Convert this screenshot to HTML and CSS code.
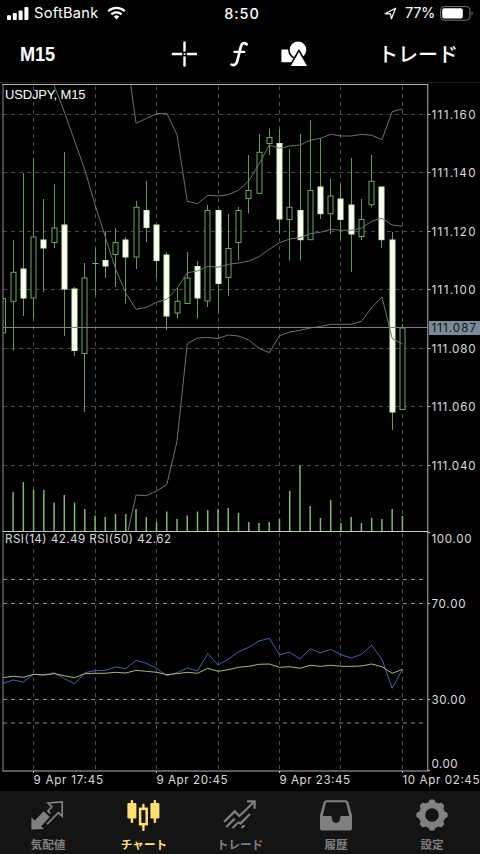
FILE: index.html
```html
<!DOCTYPE html>
<html lang="ja">
<head>
    <meta charset="UTF-8">
    <meta name="viewport" content="width=device-width, initial-scale=1.0">
    <title>USDJPY, M15</title>
    <link rel="stylesheet" href="styles.css">
</head>
<body>
    <div class="status-bar">
        <div class="carrier">
            <svg width="22" height="13" viewBox="0 0 22 13" fill="#fff">
                <rect x="0" y="8.3" width="4" height="4.7" rx="1"/>
                <rect x="5.8" y="6" width="4" height="7" rx="1"/>
                <rect x="11.6" y="3.4" width="4" height="9.6" rx="1"/>
                <rect x="17.4" y="0" width="4" height="13" rx="1"/>
            </svg>
            <span class="carrier-name">SoftBank</span>
            <svg class="wifi" width="19" height="14" viewBox="0 0 19 14" fill="none" stroke="#fff" stroke-width="2.3">
                <path d="M1.2 5.2a11.8 11.8 0 0 1 16.6 0"/>
                <path d="M4.4 8.4a7.2 7.2 0 0 1 10.2 0"/>
                <path d="M9.5 13.4l-2.7-2.8a3.8 3.8 0 0 1 5.4 0z" fill="#fff" stroke="none"/>
            </svg>
        </div>
        <div class="clock">8:50</div>
        <div class="battery">
            <svg width="13" height="13" viewBox="0 0 13 13" fill="none" stroke="#fff" stroke-width="1.2" stroke-linejoin="round">
                <path d="M1 6.7L11.6 1.2L7.4 11.8L6.5 6.9z"/>
            </svg>
            <span class="percent">77%</span>
            <svg class="cell" width="34" height="15" viewBox="0 0 34 15">
                <rect x=".6" y=".6" width="29.4" height="13.6" rx="3.6" fill="none" stroke="#777" stroke-width="1"/>
                <rect x="2.2" y="2.2" width="20.6" height="10.4" rx="2" fill="#fff"/>
                <path d="M31.6 5q2 2.4 0 4.8z" fill="#888"/>
            </svg>
        </div>
    </div>

    <div class="toolbar">
        <span class="timeframe">M15</span>
        <div class="tools">
            <svg width="26" height="26" viewBox="0 0 26 26" stroke="#fff" stroke-width="2.4" stroke-linecap="round">
                <path d="M13.5 1.4v8.2M13.5 16.4v8.2M1.9 13h8.2M16.9 13h8.2"/>
                <path d="M13.5 13h.01" stroke-width="2"/>
            </svg>
            <svg width="26" height="26" viewBox="0 0 26 26" fill="none" stroke="#fff" stroke-linecap="round">
                <path d="M20.6 3.3C18.2 1.2 15.8 2 14.8 5.8L11.4 19.5C10.6 23.2 8.4 24.9 5.6 23.6" stroke-width="2.7"/>
                <path d="M8.4 10.9h9.8" stroke-width="2.3"/>
            </svg>
            <svg width="26" height="26" viewBox="0 0 26 26" fill="#fff" stroke="#000" stroke-width="1.6">
                <rect x="-.4" y="7.6" width="14.6" height="14.4" rx="1.5"/>
                <circle cx="17" cy="8.8" r="9.1"/>
                <path d="M17.9 9.4L27.4 25.9H8.4z" stroke-linejoin="round"/>
            </svg>
        </div>
        <span class="trade">トレード</span>
    </div>

    <svg class="chart" id="chart" width="480" height="708" viewBox="0 83 480 708"></svg>

    <div class="tab-bar">
        <div class="tab">
            <svg width="34" height="32" viewBox="0 0 34 32">
                <path d="M.4 30.6V18.4L3.8 21.4L12.6 12.2L18.8 18L10 27.2L13 30z" fill="#808080"/>
                <path d="M19.2 14.4L16.9 11.9L20.9 7.8L17.1 3.9L31.2 2.9V17.2L27.4 13.6L16 25.2" fill="none" stroke="#808080" stroke-width="1.7"/>
            </svg>
            <span>気配値</span>
        </div>
        <div class="tab active">
            <svg width="34" height="32" viewBox="0 0 34 32" fill="#ffdf73">
                <rect x=".4" y="4" width="9" height="15.6" rx="1"/>
                <rect x="3.7" y="1" width="2.4" height="23" rx="1"/>
                <rect x="23.4" y="4" width="9" height="15.6" rx="1"/>
                <rect x="26.7" y="1" width="2.4" height="23" rx="1"/>
                <path d="M16.4 6v4M16.4 27v4" stroke="#ffdf73" stroke-width="2.4" stroke-linecap="round"/>
                <rect x="13.1" y="9.8" width="6.6" height="15.4" fill="none" stroke="#ffdf73" stroke-width="2.5"/>
            </svg>
            <span>チャート</span>
        </div>
        <div class="tab">
            <svg width="34" height="32" viewBox="0 0 34 32" fill="none" stroke="#808080" stroke-width="2.2">
                <path d="M1 22.8L11.8 12.4L16.4 17L31 3"/>
                <path d="M24 2.4h7.6v7.4"/>
                <path d="M3.2 28L11.8 19.6M9.6 29L14.4 24.2M14.4 23.2l3.2 1.2L27 15M18.6 29L21.4 26.2"/>
            </svg>
            <span>トレード</span>
        </div>
        <div class="tab">
            <svg width="34" height="32" viewBox="0 0 34 32" fill="#808080" fill-rule="evenodd">
                <path d="M7.6 1.2H26.4Q28.6 1.2 29.2 3L33 16V28.4Q33 31.6 30 31.6H4Q1 31.6 1 28.4V16L4.8 3Q5.4 1.2 7.6 1.2zM8 3.2Q7 3.2 6.6 4.4L3.8 16.9H12.4C12.8 21.6 14 23.7 17 23.7S21.2 21.6 21.6 16.9H30.2L27.4 4.4Q27 3.2 26 3.2z"/>
            </svg>
            <span>履歴</span>
        </div>
        <div class="tab">
            <svg width="34" height="32" viewBox="0 0 34 32">
                <circle cx="17" cy="16" r="10" fill="none" stroke="#808080" stroke-width="6.4"/>
                <g stroke="#808080" stroke-width="6.6" stroke-linecap="round">
                    <path d="M17 3.5v2M17 26.5v2M4.5 16h2M27.5 16h2"/>
                    <path d="M17 3.8v2M17 26.2v2M4.8 16h2M27.2 16h2" transform="rotate(45 17 16)"/>
                </g>
            </svg>
            <span>設定</span>
        </div>
    </div>

    <script src="chart.js"></script>
</body>
</html>
```

FILE: styles.css
```css
body {
    margin: 0;
    width: 480px;
    height: 854px;
    display: flex;
    flex-direction: column;
    overflow: hidden;
    background-color: #000;
    color: #fff;
    font-family: Inter, "Noto Sans CJK JP", sans-serif;
}
svg {
    display: block;
    flex-shrink: 0;
}
.status-bar {
    height: 27px;
    box-sizing: border-box;
    padding: 0 7px;
    display: grid;
    grid-template-columns: 1fr auto 1fr;
    align-items: center;
    line-height: 27px;
}
.carrier,
.battery {
    display: flex;
    align-items: center;
}
.carrier-name {
    margin-left: 5px;
    width: 66px;
    font-size: 14.6px;
    letter-spacing: 0.3px;
    white-space: nowrap;
}
.wifi {
    margin-left: 7px;
    margin-top: -2px;
}
.clock {
    padding-left: 4px;
    font-size: 14.5px;
    font-weight: 500;
    letter-spacing: 0.9px;
}
.battery {
    justify-content: flex-end;
    margin-right: -1px;
}
.percent {
    margin-left: 8px;
    margin-right: 5px;
    font-size: 14.6px;
    letter-spacing: -0.4px;
}
.toolbar {
    height: 56px;
    box-sizing: border-box;
    border-bottom: 1px solid #1c1c1c;
    padding: 0 22px 1px 20px;
    display: flex;
    align-items: center;
}
.timeframe {
    width: 151px;
    font-family: "Liberation Sans", sans-serif;
    font-size: 21px;
    font-weight: bold;
    transform: scaleX(0.86);
    transform-origin: left;
}
.tools {
    display: flex;
    gap: 29px;
}
.trade {
    margin-left: auto;
    margin-top: -2px;
    font-family: "Noto Sans CJK JP", sans-serif;
    font-size: 20px;
    font-weight: 500;
}
.chart text {
    fill: #ddd;
    font-size: 11.6px;
}
.chart .symbol {
    fill: #fff;
    font-family: "Liberation Sans", sans-serif;
    font-size: 13px;
}
.chart .current {
    fill: #101418;
}
.tab-bar {
    height: 63px;
    background-color: #141414;
    display: grid;
    grid-template-columns: repeat(5, 1fr);
}
.tab {
    display: flex;
    flex-direction: column;
    align-items: center;
    padding-top: 8px;
    color: #808080;
    font-family: "Noto Sans CJK JP", sans-serif;
    font-size: 11.6px;
    font-weight: bold;
    line-height: 16px;
}
.tab span {
    margin-top: 5px;
}
.tab.active {
    color: #ffdf73;
}
```

FILE: chart.js
```js
const svg = document.getElementById('chart');
const NS = 'http://www.w3.org/2000/svg';

function add(tag, attrs, text) {
    const el = document.createElementNS(NS, tag);
    for (const key in attrs) el.setAttribute(key, attrs[key]);
    if (text) el.textContent = text;
    svg.appendChild(el);
}

function line(x1, y1, x2, y2, stroke, dash) {
    add('line', { x1, y1, x2, y2, stroke, 'stroke-width': 1, 'stroke-dasharray': dash || 'none' });
}

function label(x, y, width, text, cls) {
    add('text', { x, y, textLength: width, class: cls || '' }, text);
}

const barX = i => 2.9 + i * 10.245;

// high, body top, body bottom, low, filled
const candles = [
    [298.5, 298.5, 333, 333, 0], [240, 272.3, 301.3, 350.7, 0], [173, 269, 298, 316, 1],
    [158, 237, 298, 318, 0], [199, 240, 248, 292, 1], [184, 228, 242.5, 248, 0],
    [152, 225, 289, 336, 1], [287, 289, 350.5, 356, 1], [263, 278, 353.5, 412, 0],
    [248, 263.5, 263.5, 295, 0], [231, 260.5, 266, 278, 1], [228, 242.5, 254.5, 287, 0],
    [237, 240, 257, 303.5, 1], [201, 207.3, 257, 269, 0], [181, 210.5, 227.5, 242, 1],
    [225, 225, 260.5, 278, 1], [252, 255, 316, 330, 1], [287, 301.3, 313, 318.5, 0],
    [252, 278, 303.5, 303.5, 0], [261, 266.5, 298, 318.5, 1], [205, 210.5, 301, 307, 0],
    [210.5, 210.5, 283.5, 313, 1], [214, 248.5, 277.5, 296, 0], [207, 210.5, 242.5, 260, 0],
    [155, 190.5, 198.5, 213.5, 0], [134, 152.3, 193.3, 193.3, 0], [128.5, 137.5, 143.5, 155, 0],
    [129, 143.5, 219, 234, 1], [149, 207.3, 219.5, 260.5, 0], [134, 210.5, 239.7, 260.5, 1],
    [120, 190.5, 239.7, 239.7, 0], [138, 187, 213.7, 219, 1], [178.5, 196, 213.7, 234, 0],
    [184, 199, 219.5, 240, 1], [158, 205, 234, 272, 1], [199, 219.5, 236.5, 240, 0],
    [155, 181.3, 204.7, 207.5, 0], [187, 187, 239.7, 248, 1], [232, 240, 412, 430, 1],
    [324, 328, 409.5, 409.5, 0]
];

const volumes = [
    531, 492, 482, 490, 490, 502.5, 495, 502.5, 509, 515.5, 517, 514, 514, 509, 517, 522, 511.5, 519, 515.5, 511.5,
    510, 509, 508, 513, 522, 523, 522, 519, 491, 465.5, 506, 518, 500, 523, 517, 523, 518, 519, 509, 516
];

// Bollinger bands: entry point on the frame, first bar, then one value per bar
const bands = [
    { start: '130.7,85', from: 13, ys: [123.3, 118.5, 113.7, 113.3, 135, 201.3, 203.7, 195.3, 196, 194.7, 190.3, 181, 164, 145, 148.3, 146, 145, 140.3, 138.3, 134.3, 136, 136, 134.3, 135.3, 139.7, 111.7, 109] },
    { start: '54,85', from: 6, ys: [112, 141, 170, 205, 237, 269, 293.3, 309.3, 307.3, 302.3, 299.3, 288.3, 272.7, 271, 266.3, 267.3, 264.3, 263, 261, 256.7, 249.3, 242.7, 239, 237.7, 233.7, 232.3, 229.3, 230.3, 230.3, 228, 221.3, 218.3, 225, 226.3] },
    { start: '128,531', from: 13, ys: [495, 495.7, 491, 484.5, 441, 343.5, 338, 337.5, 338.5, 335, 336, 340, 348.3, 352.7, 335.7, 332, 330.3, 328, 326.5, 324.3, 324.3, 324.3, 321.3, 307.5, 297, 338.5, 344] }
];

const rsi14 = [
    683.3, 680, 682, 674.3, 675, 672.7, 678.7, 683.7, 672.7, 670.7, 670.3, 667, 668.7, 660.3, 663.3, 668.3, 675.7, 672.7, 668, 671,
    653.3, 665, 659.3, 651.7, 647.3, 641, 638.3, 654.7, 652.3, 659, 648.7, 653, 649.3, 654.7, 658, 654.3, 645.3, 659.3, 688.3, 669.3
];
const rsi50 = [
    677.7, 676.3, 677.3, 674.3, 675, 673.7, 675.7, 677.7, 673.7, 673.3, 673.3, 672.3, 673, 670.3, 671.3, 672.3, 674.7, 673.7, 672.3, 673.3,
    668.3, 671.3, 669.7, 667.3, 666.3, 664.3, 664, 667.3, 666.7, 668.3, 665.3, 666.3, 665.3, 666.3, 666.3, 666, 664, 666.7, 673.3, 669.3
];

function curve(ys, from, stroke, start) {
    const points = ys.map((y, i) => barX(from + i) + ',' + y);
    if (start) points.unshift(start);
    add('polyline', { points: points.join(' '), fill: 'none', stroke, 'stroke-width': 1 });
}

// grid
for (let i = 3; i < 40; i += 6) {
    const x = Math.floor(barX(i)) + 0.5;
    line(x, 86, x, 531, '#4c4c4c', '4 4');
    line(x, 533, x, 771, '#4c4c4c', '4 4');
}
const prices = ['111.160', '111.140', '111.120', '111.100', '111.080', '111.060', '111.040'];
prices.forEach((price, i) => {
    const y = Math.round(114 + i * 58.45) + 0.5;
    line(3, y, 427, y, '#484848', '4 4');
    line(428, y, 430.5, y, '#bbb');
    label(431.5, y + 4, 44, price);
});
[579.5, 603.5, 699.5, 723].forEach(y => line(3, y, 427, y, '#8c8c8c', '4 4'));

// volumes and candles
volumes.forEach((y, i) => {
    if (i) add('rect', { x: barX(i) - 0.8, y, width: 1.5, height: 531 - y, fill: '#7fb873' });
});
candles.forEach(([high, top, bottom, low, filled], i) => {
    const x = Math.floor(barX(i)) + 0.5;
    line(x, high, x, top, '#659a57');
    line(x, bottom, x, low, '#659a57');
    if (top === bottom) {
        line(x - 3, top, x + 3, top, '#7fb873');
    } else if (i === 0) {
        add('path', { d: 'M3 298.5H5.5V333H3', fill: 'none', stroke: '#6fa762' });
    } else {
        add('rect', {
            x: x - 2.5, y: top, width: 5, height: bottom - top,
            fill: filled ? '#fffff4' : '#000', stroke: filled ? '#d3f5c5' : '#6fa762', 'stroke-width': 1
        });
    }
});

bands.forEach(band => curve(band.ys, band.from, '#66796a', band.start));
curve(rsi14, 0, '#4a62a6');
curve(rsi50, 0, '#b3b57c');

// bid line
line(3, 327.5, 428, 327.5, '#7c8282');
add('rect', { x: 429, y: 321, width: 51, height: 14, fill: '#7b8999' });
label(431.5, 332, 44.5, '111.087', 'current');

// frame
line(3, 84, 3, 771.5, '#8c8c8c');
line(2.5, 84.5, 428, 84.5, '#b4b4b4');
line(427.8, 84, 427.8, 771, '#b4b4b4');
line(2.5, 531.5, 428, 531.5, '#c8c8c8');
line(2.5, 771, 428.5, 771, '#b4b4b4');

label(5, 98.5, 80.5, 'USDJPY, M15', 'symbol');
label(5, 543, 166, 'RSI(14) 42.49 RSI(50) 42.62');
label(431.5, 543, 40, '100.00');
label(431.5, 608, 34, '70.00');
label(431.5, 704, 34, '30.00');
label(431.5, 768, 26, '0.00');
[532.5, 603.5, 699.5, 770.5].forEach(y => line(428, y, 430, y, '#bbb'));

[[33.5, 69.5, '9 Apr 17:45'], [156.5, 71, '9 Apr 20:45'], [279.5, 70.5, '9 Apr 23:45'], [402.5, 77, '10 Apr 02:45']].forEach(([x, width, text]) => {
    line(x, 771, x, 773, '#bbb');
    label(x, 783.5, width, text);
});
```
